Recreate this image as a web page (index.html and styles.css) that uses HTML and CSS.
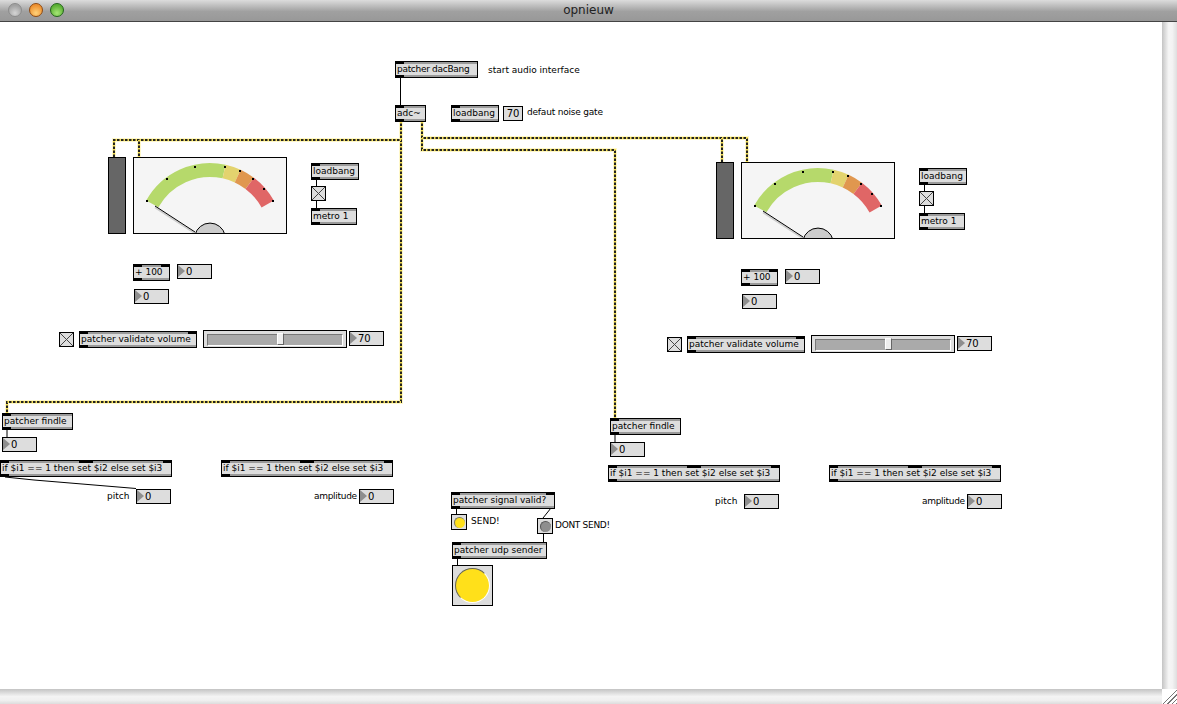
FILE: index.html
```html
<!DOCTYPE html>
<html>
<head>
<meta charset="utf-8">
<title>opnieuw</title>
<link rel="stylesheet" href="styles.css">
</head>
<body>
<div class="window">
	<div class="titlebar">
		<span class="light light-close"></span>
		<span class="light light-min"></span>
		<span class="light light-max"></span>
		<span class="title">opnieuw</span>
	</div>
	<div class="middle">
		<div class="canvas">
			<!-- wires are drawn in window coordinates -->
			<svg class="wires" viewBox="0 22 1162 667">
				<defs>
					<g id="sig1">
						<path d="M401 122V402H7V413"/>
						<path d="M401 140H114V157"/>
						<path d="M139 140V157"/>
					</g>
					<g id="sig2">
						<path d="M422 122V150H615V418"/>
						<path d="M422 138H747V162"/>
						<path d="M722 138V162"/>
					</g>
				</defs>
				<use href="#sig1" class="sig-halo"/>
				<use href="#sig2" class="sig-halo"/>
				<use href="#sig1" class="sig-base"/>
				<use href="#sig1" class="sig-dash"/>
				<use href="#sig2" class="sig-base"/>
				<use href="#sig2" class="sig-dash"/>
				<path class="cord" d="M400.500 78V105"/>
				<path class="cord" d="M456.500 508V514"/>
				<path class="cord" d="M551 508L543 518"/>
				<path class="cord" d="M543.500 533V542"/>
				<path class="cord" d="M457.500 558V565"/>
			</svg>

			<div class="obj tighter at-dac">patcher dacBang</div>
			<div class="label at-start">start audio interface</div>
			<div class="obj at-adc">adc~</div>
			<div class="obj at-lb">loadbang</div>
			<div class="flat at-gate">70</div>
			<div class="label tight at-gatetext">defaut noise gate</div>

			<div class="strip">
				<svg class="strip-cords" viewBox="0 22 500 500">
					<path class="cord" d="M316.500 180V208"/>
					<path class="cord" d="M7 430V437"/>
					<path class="cord" d="M5 477L34 480L136 488.500"/>
				</svg>
				<div class="vu-bar"></div>
				<svg class="vu" viewBox="133 157 154 77">
					<g id="vu-face">
						<g class="arc">
							<path stroke="#b6d96b" d="M152.300 203.900A66 66 0 0 1 224.100 171.500"/>
							<path stroke="#e3d36e" d="M224.100 171.500A66 66 0 0 1 237.700 176.100"/>
							<path stroke="#e0974f" d="M237.700 176.100A66 66 0 0 1 249.700 183.300"/>
							<path stroke="#e06666" d="M249.700 183.300A66 66 0 0 1 267.700 204"/>
						</g>
						<g>
							<rect x="146" y="200" width="2" height="2"/>
							<rect x="166" y="178" width="2" height="2"/>
							<rect x="194" y="166" width="2" height="2"/>
							<rect x="224" y="166" width="2" height="2"/>
							<rect x="239" y="170" width="2" height="2"/>
							<rect x="252" y="178" width="2" height="2"/>
							<rect x="263" y="188" width="2" height="2"/>
							<rect x="272" y="200" width="2" height="2"/>
						</g>
						<path class="needle-shadow" d="M155 207.500L195 233.500"/>
						<path class="needle" d="M155 206L195 232"/>
						<path class="dome" d="M195 235A15.400 15.400 0 0 1 225 235"/>
					</g>
				</svg>

				<div class="obj at-lb2">loadbang</div>
				<div class="toggle at-tog1"></div>
				<div class="obj at-metro">metro 1</div>

				<div class="obj two at-plus">+ 100</div>
				<div class="num at-n1">0</div>
				<div class="num at-n2">0</div>

				<div class="toggle at-tog2"></div>
				<div class="obj two at-valid">patcher validate volume</div>
				<div class="slider at-slider"><span class="thumb"></span></div>
				<div class="num at-n3">70</div>

				<div class="obj at-findle">patcher findle</div>
				<div class="num at-n4">0</div>
				<div class="obj three at-if1">if $i1 == 1 then set $i2 else set $i3</div>
				<div class="obj three at-if2">if $i1 == 1 then set $i2 else set $i3</div>
				<div class="label at-pitch">pitch</div>
				<div class="num at-n5">0</div>
				<div class="label tighter at-ampl">amplitude</div>
				<div class="num at-n6">0</div>
			</div>

			<div class="strip strip-r">
				<svg class="strip-cords" viewBox="0 22 500 500">
					<path class="cord" d="M316.500 180V208"/>
					<path class="cord" d="M7 430V437"/>
				</svg>
				<div class="vu-bar"></div>
				<svg class="vu" viewBox="133 157 154 77"><use href="#vu-face"/></svg>

				<div class="obj at-lb2">loadbang</div>
				<div class="toggle at-tog1"></div>
				<div class="obj at-metro">metro 1</div>

				<div class="obj two at-plus">+ 100</div>
				<div class="num at-n1">0</div>
				<div class="num at-n2">0</div>

				<div class="toggle at-tog2"></div>
				<div class="obj two at-valid">patcher validate volume</div>
				<div class="slider at-slider"><span class="thumb"></span></div>
				<div class="num at-n3">70</div>

				<div class="obj at-findle">patcher findle</div>
				<div class="num at-n4">0</div>
				<div class="obj three at-if1">if $i1 == 1 then set $i2 else set $i3</div>
				<div class="obj three at-if2">if $i1 == 1 then set $i2 else set $i3</div>
				<div class="label at-pitch">pitch</div>
				<div class="num at-n5">0</div>
				<div class="label tighter at-ampl">amplitude</div>
				<div class="num at-n6">0</div>
			</div>

			<div class="obj two at-signal">patcher signal valid?</div>
			<div class="btn at-send"><span class="led led-on"></span></div>
			<div class="label at-sendtext">SEND!</div>
			<div class="btn at-dont"><span class="led led-off"></span></div>
			<div class="label tighter at-donttext">DONT SEND!</div>
			<div class="obj at-udp">patcher udp sender</div>
			<div class="btn at-big"><span class="led led-big"></span></div>
		</div>
		<div class="vscroll"></div>
	</div>
	<div class="bottom">
		<div class="hscroll"></div>
		<div class="grip"></div>
	</div>
</div>
</body>
</html>
```

FILE: styles.css
```css
*{ margin:0; padding:0; box-sizing:border-box;}
body{ background:#fff; font-family:"DejaVu Sans", sans-serif; font-size:9px; color:#000;}

.window{ width:1177px; height:704px; display:flex; flex-direction:column; overflow:hidden;}
.titlebar{ position:relative; flex:none; height:22px; display:flex; align-items:center; gap:7px; padding:0 0 1px 8px; background:linear-gradient(#dcdcdc,#a0a0a0 55%,#989898); border-bottom:1px solid #444;}
.title{ position:absolute; left:0; right:0; top:3px; text-align:center; font-size:12px; line-height:15px; color:#222;}
.light{ width:14px; height:14px; border-radius:50%; flex:none;}
.light-close{ background:radial-gradient(circle at 50% 75%,#d4d4d4,#a2a2a2 70%); border:1px solid #8c8c8c;}
.light-min{ background:radial-gradient(circle at 50% 75%,#ffd27a,#ee9232 70%); border:1px solid #8f4a12;}
.light-max{ background:radial-gradient(circle at 50% 75%,#a6e676,#5cb034 70%); border:1px solid #23651b;}

.middle{ flex:1; display:flex; min-height:0;}
.canvas{ flex:1; position:relative; overflow:hidden;}
.vscroll{ width:15px; flex:none; background:linear-gradient(90deg,#c4c4c4,#f6f6f6 45%,#f2f2f2 70%,#dedede);}
.bottom{ height:15px; flex:none; display:flex;}
.hscroll{ flex:1; background:linear-gradient(#c4c4c4,#f4f4f4 50%,#f0f0f0 75%,#dcdcdc);}
.grip{ width:15px; background:linear-gradient(135deg,#fff 45%,transparent 45%), repeating-linear-gradient(135deg,#fff 0,#fff 2px,#777 2px,#777 3px);}

.wires{ position:absolute; left:0; top:0; width:1162px; height:667px;}
.wires path, .strip-cords path{ fill:none;}
.sig-halo{ fill:none; stroke:#fff8c8; stroke-width:4;}
.sig-base{ fill:none; stroke:#222; stroke-width:2;}
.sig-dash{ fill:none; stroke:#f5df50; stroke-width:2; stroke-dasharray:1.500 2.500;}
.cord{ stroke:#000; stroke-width:1;}

/* max objects */
.obj, .num, .flat, .toggle, .btn, .slider{ position:absolute; border:1px solid #000; background:#ddd;}
.obj{ height:17px; line-height:15px; padding-left:1px; white-space:nowrap;}
.obj::before, .obj::after{ content:""; position:absolute; left:0; right:0; height:2px;}
.obj::before{ top:0; background:linear-gradient(90deg,#000 8px,#9a9a9a 8px);}
.obj::after{ bottom:0; background:linear-gradient(90deg,#000 8px,#9a9a9a 8px);}
.two::before{ background:linear-gradient(90deg,#000 8px,#9a9a9a 8px,#9a9a9a calc(100% - 8px),#000 calc(100% - 8px));}
.three::before{ background:linear-gradient(90deg,#000 8px,#9a9a9a 8px,#9a9a9a 46%,#000 46%,#000 54%,#9a9a9a 54%,#9a9a9a calc(100% - 8px),#000 calc(100% - 8px));}

.num{ width:35px; height:15px; line-height:13px; padding-left:8px; font-size:10px;}
.num::before{ content:""; position:absolute; left:0; top:0; border-left:7px solid #8e8e8e; border-top:6.500px solid transparent; border-bottom:6.500px solid transparent;}
.flat{ width:20px; height:15px; line-height:13px; font-size:10px; text-align:center;}
.label{ position:absolute; line-height:12px; white-space:nowrap;}
.tight{ letter-spacing:-.2px;}
.tighter{ letter-spacing:-.3px;}

.toggle{ width:15px; height:15px; background:linear-gradient(45deg,transparent calc(50% - .6px),#444 calc(50% - .6px),#444 calc(50% + .6px),transparent calc(50% + .6px)), linear-gradient(-45deg,transparent calc(50% - .6px),#444 calc(50% - .6px),#444 calc(50% + .6px),transparent calc(50% + .6px)), #ddd;}

.btn{ display:flex; align-items:center; justify-content:center; width:16px; height:16px;}
.led{ display:block; border-radius:50%; width:11px; height:11px;}
.led-on{ background:#ffe01a; border-top:1px solid #776; border-left:1px solid #776;}
.led-off{ background:#8e8e8e; border-top:1px solid #555; border-left:1px solid #555;}
.led-big{ background:#ffe01a; width:35px; height:35px; border-top:1px solid #665; border-left:1px solid #665; border-right:1px solid #fff; border-bottom:1px solid #fff;}

.slider{ width:144px; height:18px; padding:3px;}
.slider::before{ content:""; display:block; height:100%; background:#aaa; border:1px solid #777; border-right-color:#fff; border-bottom-color:#fff;}
.thumb{ position:absolute; left:73px; top:2px; width:7px; height:12px; background:#eee; border:1px solid #666; border-top-color:#fff; border-left-color:#fff;}

/* one meter strip, the second copy sits 608,5 further on */
.strip{ position:absolute; left:0; top:0;}
.strip-r{ left:608px; top:5px;}
.strip-cords{ position:absolute; left:0; top:0; width:500px; height:500px;}
.vu-bar{ position:absolute; left:108px; top:135px; width:18px; height:77px; background:#666; border:1px solid #000;}
.vu{ position:absolute; left:133px; top:135px; width:154px; height:77px; background:#f5f5f5; outline:1px solid #000; outline-offset:-1px;}
.arc path{ fill:none; stroke-width:14;}
.needle{ stroke:#000; stroke-width:1; fill:none;}
.needle-shadow{ stroke:#ccc; stroke-width:1.500; fill:none;}
.dome{ fill:#ccc; stroke:#000; stroke-width:1;}

/* places on the patcher canvas (window y minus 22) */
.at-dac{ left:395px; top:39px; width:83px;}
.at-start{ left:488px; top:42px;}
.at-adc{ left:395px; top:83px; width:31px;}
.at-lb{ left:451px; top:83px; width:48px;}
.at-gate{ left:503px; top:84px;}
.at-gatetext{ left:527px; top:84px;}
.at-lb2{ left:311px; top:141px; width:48px;}
.at-tog1{ left:311px; top:164px;}
.at-metro{ left:311px; top:186px; width:46px;}
.at-plus{ left:133px; top:242px; width:37px;}
.at-n1{ left:177px; top:242px;}
.at-n2{ left:134px; top:267px;}
.at-tog2{ left:59px; top:310px;}
.at-valid{ left:79px; top:309px; width:118px;}
.at-slider{ left:203px; top:308px;}
.at-n3{ left:349px; top:309px;}
.at-findle{ left:2px; top:391px; width:71px;}
.at-n4{ left:2px; top:415px;}
.at-if1{ left:0; top:438px; width:172px;}
.at-if2{ left:221px; top:438px; width:172px;}
.at-pitch{ left:107px; top:468px;}
.at-n5{ left:136px; top:467px;}
.at-ampl{ left:314px; top:468px;}
.at-n6{ left:359px; top:467px;}
.at-signal{ left:451px; top:470px; width:104px;}
.at-send{ left:451px; top:492px;}
.at-sendtext{ left:471px; top:493px;}
.at-dont{ left:537px; top:496px;}
.at-donttext{ left:555px; top:497px;}
.at-udp{ left:452px; top:520px; width:95px;}
.at-big{ left:452px; top:543px; width:41px; height:41px;}
```
